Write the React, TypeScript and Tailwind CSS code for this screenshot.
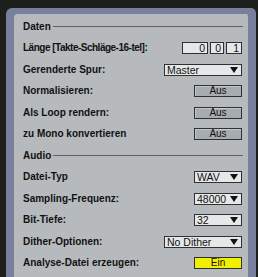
import React from 'react';

const font = { fontFamily: '"Liberation Sans", Arial, sans-serif' };

function Row({ label, tight = false, children }: { label: string; tight?: boolean; children?: React.ReactNode }) {
  return (
    <div className="flex h-[21.5px] items-center justify-between">
      <span
        className={`text-[10px] font-bold leading-none text-[#111] ${tight ? 'tracking-[-0.5px]' : ''}`}
      >
        {label}
      </span>
      {children}
    </div>
  );
}

function Section({ title }: { title: string }) {
  return (
    <div className="flex h-[21.5px] items-center gap-[2px]">
      <span className="text-[10px] font-bold leading-none text-[#111]">{title}</span>
      <div className="h-[1px] flex-1 bg-[#5d6266]" />
    </div>
  );
}

function Toggle({ on = false }: { on?: boolean }) {
  return (
    <div
      className={`mr-[1px] flex h-[12px] w-[48px] items-center justify-center border border-[#2e3133] text-[10px] leading-none text-[#111] ${
        on ? 'bg-[#f0f000]' : 'bg-[#a7acb0] shadow-[inset_1px_1px_0_#c4c8cb]'
      }`}
    >
      {on ? 'Ein' : 'Aus'}
    </div>
  );
}

function Select({ value, wide = false }: { value: string; wide?: boolean }) {
  return (
    <div
      className={`mr-[1px] flex h-[12px] items-center justify-between border border-[#2e3133] bg-[#e6e8e8] pl-[2px] pr-[3px] text-[10.5px] leading-none text-[#111] ${
        wide ? 'w-[78px]' : 'w-[48px]'
      }`}
    >
      <span>{value}</span>
      <span className="h-0 w-0 border-l-[4px] border-r-[4px] border-t-[6px] border-l-transparent border-r-transparent border-t-[#111]" />
    </div>
  );
}

function NumBox({ v, w }: { v: string; w: string }) {
  return (
    <div
      className={`flex h-[12px] items-center justify-end border border-[#2e3133] bg-[#e6e8e8] pr-[2px] text-[10.5px] leading-none text-[#111] ${w}`}
    >
      {v}
    </div>
  );
}

export default function App() {
  return (
    <div className="flex h-[277px] w-[258px] flex-col bg-[#1c1f1c] pl-[6px] pr-[2px] pt-[8px]" style={font}>
      <div className="flex flex-1 flex-col rounded-tl-[6px] rounded-tr-[5px] bg-[#78809e] px-[8px] pt-[6px]">
        <div className="flex-1 rounded-tl-[4px] rounded-tr-[2px] bg-[#b6babd] pl-[9px] pr-[5px] pt-[2px]">
          <Section title="Daten" />
          <Row label="Länge [Takte-Schläge-16-tel]:" tight>
            <div className="mr-[1px] flex gap-[2px]">
              <NumBox v="0" w="w-[26px]" />
              <NumBox v="0" w="w-[14px]" />
              <NumBox v="1" w="w-[16px]" />
            </div>
          </Row>
          <Row label="Gerenderte Spur:">
            <Select value="Master" wide />
          </Row>
          <Row label="Normalisieren:">
            <Toggle />
          </Row>
          <Row label="Als Loop rendern:">
            <Toggle />
          </Row>
          <Row label="zu Mono konvertieren">
            <Toggle />
          </Row>
          <Section title="Audio" />
          <Row label="Datei-Typ">
            <Select value="WAV" />
          </Row>
          <Row label="Sampling-Frequenz:">
            <Select value="48000" />
          </Row>
          <Row label="Bit-Tiefe:">
            <Select value="32" />
          </Row>
          <Row label="Dither-Optionen:">
            <Select value="No Dither" wide />
          </Row>
          <Row label="Analyse-Datei erzeugen:">
            <Toggle on />
          </Row>
        </div>
      </div>
    </div>
  );
}
